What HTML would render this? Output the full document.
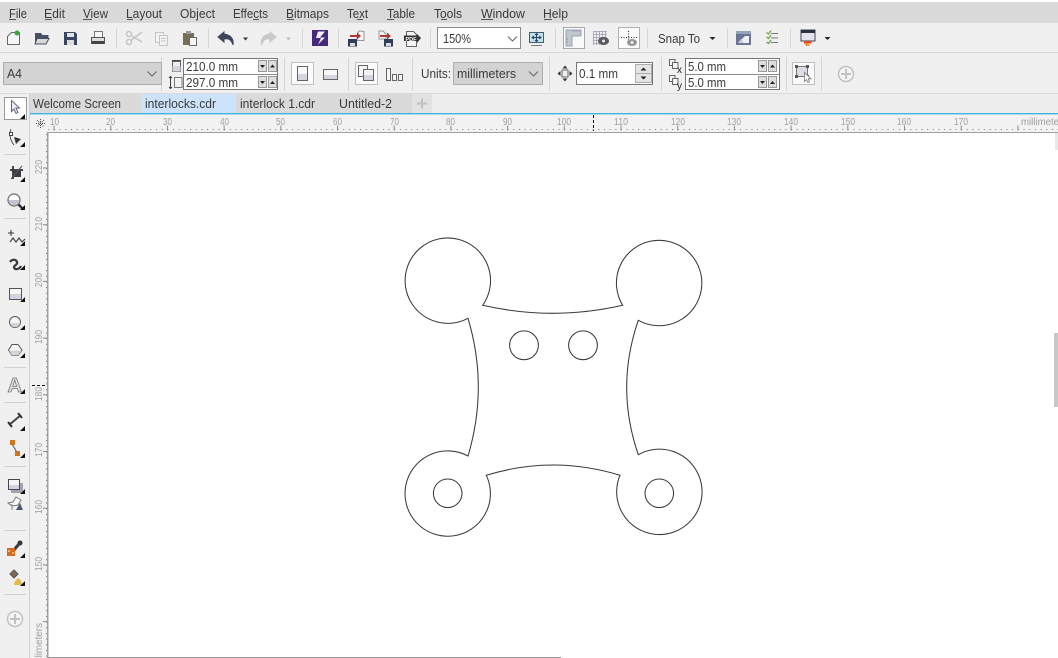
<!DOCTYPE html>
<html><head><meta charset="utf-8"><style>
html,body{margin:0;padding:0;width:1058px;height:658px;overflow:hidden;background:#fff}
svg{display:block;filter:blur(.3px)}
text{font-family:"Liberation Sans",sans-serif;font-size:13px;fill:#3a3a3a}
.r text{font-size:10px;fill:#a0a0a0}
</style></head><body>
<svg width="1058" height="658" viewBox="0 0 1058 658" xmlns="http://www.w3.org/2000/svg">
<defs>
<pattern id="hd" x="54" y="0" width="5.67" height="658" patternUnits="userSpaceOnUse"><rect x="0" y="129" width="1" height="1" fill="#777"/></pattern>
<pattern id="vd" x="0" y="168" width="658" height="5.67" patternUnits="userSpaceOnUse"><rect x="46" y="0" width="1" height="1" fill="#777"/></pattern>
</defs>
<!-- backgrounds -->
<rect width="1058" height="658" fill="#fff"/>
<rect y="2" width="1058" height="21" fill="#d9d9d9"/>
<rect y="23" width="1058" height="71" fill="#f0f0f0"/>
<rect y="52" width="1058" height="1" fill="#d9d9d9"/>
<rect y="93" width="1058" height="1" fill="#d9d9d9"/>
<rect y="94" width="1058" height="19" fill="#ededed"/>
<rect x="0" y="94" width="30" height="564" fill="#f0f0f0"/>
<rect x="30" y="114" width="1028" height="18" fill="#f2f2f2"/>
<rect x="30" y="114" width="18" height="544" fill="#f2f2f2"/>
<rect x="29" y="94" width="1" height="564" fill="#cfcfcf"/>
<!-- tabs -->
<rect x="30" y="94" width="111" height="19" fill="#dadada"/>
<rect x="141" y="94" width="95" height="19" fill="#cde3fb"/>
<rect x="236" y="94" width="99" height="19" fill="#dadada"/>
<rect x="335" y="94" width="77" height="19" fill="#dadada"/>
<rect x="412" y="94" width="20" height="19" fill="#e2e2e2"/>
<path d="M417 103.500h10M422 98.500v10" stroke="#c0c0c0" stroke-width="2"/>
<rect x="30" y="113" width="1028" height="1.400" fill="#3db5dc"/>
<text x="33" y="108" textLength="88" lengthAdjust="spacingAndGlyphs">Welcome Screen</text>
<text x="145" y="108" textLength="71" lengthAdjust="spacingAndGlyphs">interlocks.cdr</text>
<text x="240" y="108" textLength="75" lengthAdjust="spacingAndGlyphs">interlock 1.cdr</text>
<text x="339" y="108" textLength="53" lengthAdjust="spacingAndGlyphs">Untitled-2</text>
<!-- menu -->
<g>
<text x="9" y="18" textLength="18" lengthAdjust="spacingAndGlyphs">File</text>
<text x="44" y="18" textLength="21" lengthAdjust="spacingAndGlyphs">Edit</text>
<text x="83" y="18" textLength="25" lengthAdjust="spacingAndGlyphs">View</text>
<text x="126" y="18" textLength="36" lengthAdjust="spacingAndGlyphs">Layout</text>
<text x="180" y="18" textLength="35" lengthAdjust="spacingAndGlyphs">Object</text>
<text x="233" y="18" textLength="35" lengthAdjust="spacingAndGlyphs">Effects</text>
<text x="286" y="18" textLength="43" lengthAdjust="spacingAndGlyphs">Bitmaps</text>
<text x="347" y="18" textLength="21" lengthAdjust="spacingAndGlyphs">Text</text>
<text x="387" y="18" textLength="28" lengthAdjust="spacingAndGlyphs">Table</text>
<text x="434" y="18" textLength="28" lengthAdjust="spacingAndGlyphs">Tools</text>
<text x="481" y="18" textLength="44" lengthAdjust="spacingAndGlyphs">Window</text>
<text x="543" y="18" textLength="25" lengthAdjust="spacingAndGlyphs">Help</text>
<path d="M9 19.500h7M45 19.500h7M83 19.500h9M127 19.500h6M253 19.500h6M287 19.500h7M357 19.500h6M387 19.500h7M441 19.500h6M481 19.500h12M544 19.500h8" stroke="#555" stroke-width="1"/>
</g>
<!-- separators toolbar -->
<path d="M116.500 28v20M208.500 28v20M302.500 28v20M338.500 28v20M430.500 28v20M555.500 28v20M647.500 28v20M727.500 28v20M790.500 28v20M161.500 57v34M284.500 57v34M348.500 57v34M412.500 57v34M549.500 57v34M661.500 57v34M786.500 57v34M821.500 57v34" stroke="#d6d6d6"/>
<!-- new -->
<path d="M7.500 36.500L11.500 32.500H19.500V44.500H7.500Z" fill="#f5f5f5" stroke="#666"/>
<circle cx="17" cy="33" r="2.500" fill="#3aa53a"/>
<!-- open -->
<path d="M35 33h6l1.500 2h6v3h-11l-2.500 6Z" fill="#465166"/><path d="M37 38.500h12l-3 5.500H35Z" fill="#d8d8d8" stroke="#465166"/>
<!-- save -->
<path d="M64 32h11l2 2v11H64Z" fill="#39465f"/><rect x="67" y="33" width="7" height="4" fill="#e5e5e5"/><rect x="67" y="40" width="7" height="5" fill="#dfdfdf"/>
<!-- print -->
<path d="M94.500 31.500h8v6h-8Z" fill="#f7f7f7" stroke="#777"/><rect x="91.500" y="37.500" width="13" height="6" fill="#ddd" stroke="#555"/><rect x="92" y="41" width="12" height="3" fill="#444"/>
<!-- cut -->
<g stroke="#c4c4c4" fill="none" stroke-width="1.500"><circle cx="129" cy="34" r="2.500"/><circle cx="129" cy="42" r="2.500"/><path d="M131 35.500L142 42M131 40.500L142 32"/></g>
<!-- copy -->
<g fill="#f3f3f3" stroke="#c4c4c4"><rect x="155.500" y="32.500" width="8" height="10"/><rect x="159.500" y="35.500" width="8" height="10"/><path d="M161 38.500h5M161 41h5"/></g>
<!-- paste -->
<rect x="183" y="33" width="11" height="12" fill="#7a6d58"/><rect x="186" y="31" width="5" height="3" fill="#999"/><rect x="189.500" y="37.500" width="7" height="8" fill="#f6f6f6" stroke="#666"/>
<!-- undo -->
<path d="M224 32l-6 5 6 5v-3c4-.8 7 0 9 6 1-6-2-10-9-11Z" fill="#3d4759" stroke="#3d4759"/>
<path d="M243 37.500h5l-2.500 3Z" fill="#333"/>
<!-- redo -->
<path d="M270 32l6 5-6 5v-3c-4-.8-6.500 0-8.500 6-1-6 1.500-10 8.500-11Z" fill="#c9c9c9" stroke="#c9c9c9"/>
<path d="M286 37.500h5l-2.500 3Z" fill="#bdbdbd"/>
<!-- purple -->
<rect x="312" y="30" width="16" height="16" fill="#45297c"/>
<path d="M325 31.500H318L316 38H321L318 44.500L325 37.500H320Z" fill="#f2f0f4"/>
<!-- import -->
<path d="M359 31l5 .5v9h-7v-6Z" fill="#f5f5f5" stroke="#999"/><path d="M350 35h7v-2.500l4 3.500-4 3.500V37h-7Z" fill="#b23636"/><rect x="348" y="39" width="9" height="7.500" fill="#2e3d58"/><rect x="350" y="43" width="5" height="3" fill="#ddd"/>
<!-- export -->
<path d="M379 31h4l3 3v5h-7Z" fill="#f5f5f5" stroke="#999"/><path d="M380 35h7v-2.500l4 3.500-4 3.500V37h-7Z" fill="#b23636"/><rect x="384" y="39" width="9" height="7.500" fill="#2e3d58"/><rect x="386" y="43" width="5" height="3" fill="#ddd"/>
<!-- pdf -->
<path d="M406.500 31.500h7l3 3v12h-10Z" fill="#f4f4f4" stroke="#666"/><path d="M404 35.500h13v-1.500l4 4-4 5v-2h-13Z" fill="#333"/>
<text x="405.500" y="41" style="font-size:5.500px;font-weight:bold;fill:#fff">PDF</text>
<!-- zoom combo -->
<rect x="437.500" y="27.500" width="83" height="21" fill="#fff" stroke="#8a8a8a"/>
<text x="443" y="43" textLength="28" lengthAdjust="spacingAndGlyphs">150%</text>
<path d="M508 36.500l4.500 4.500 4.500-4.500" fill="none" stroke="#666"/>
<!-- view fit -->
<rect x="529.500" y="32.500" width="14" height="10" fill="#bfe1e8" stroke="#3d616e"/><path d="M531 45.500h11" stroke="#778"/><path d="M536.500 33.500v8M532 37.500h9M535 35l1.500-1.500L538 35M535 40l1.500 1.500L538 40M534 36l-2 1.500 2 1.500M539 36l2 1.500-2 1.500" fill="none" stroke="#2a4468"/>
<!-- rulers btn -->
<rect x="563.500" y="27.500" width="21" height="21" fill="#fafafa" stroke="#a8a8a8"/>
<path d="M566 30h15v6h-9v10h-6Z" fill="#c0c7d1" stroke="#98a2ae"/>
<path d="M573 30v2M576 30v2M579 30v2M566 39h2M566 42h2" stroke="#8a94a0"/>
<!-- grid -->
<path d="M593.500 31v14M596.500 31v14M599.500 31v14M602.500 31v14M605.500 31v7M593 31.500h14M593 34.500h14M593 37.500h14M593 40.500h6M593 43.500h6" stroke="#9c9cb4" stroke-width=".8"/>
<ellipse cx="603.500" cy="41" rx="5.500" ry="4" fill="#5a5a5a"/><circle cx="603.500" cy="41" r="1.500" fill="#e8e8e8"/>
<!-- guides btn -->
<rect x="618.500" y="27.500" width="21" height="21" fill="#fbfbfb" stroke="#b0b0b0"/>
<path d="M621 37.500h16M628.500 31v14" stroke="#333" stroke-dasharray="1 1.500"/>
<ellipse cx="632" cy="42.500" rx="5" ry="3.500" fill="#959595"/><circle cx="632" cy="42.500" r="1.500" fill="#eee"/>
<!-- snap -->
<text x="658" y="43" textLength="42" lengthAdjust="spacingAndGlyphs">Snap To</text>
<path d="M709.500 37h6l-3 3Z" fill="#222"/>
<!-- options -->
<rect x="736" y="31" width="15" height="14" fill="#6b7696"/><rect x="736" y="31" width="15" height="3" fill="#9aa2b6"/><path d="M745 36h4v7h-8v-3Z" fill="#eef0f4"/><path d="M738 43l3-4 2 2v2Z" fill="#c6cbe0"/>
<!-- checklist -->
<path d="M771 33.500h7M771 38h7M771 42.500h7" stroke="#777"/>
<g fill="none" stroke="#6ba645" stroke-width="1.300"><path d="M766.500 32.500l2 1.500 2.500-3.500M766.500 37l2 1.500 2.500-3.500M766.500 42l2 1.500 2.500-3.500"/></g>
<!-- publish -->
<rect x="801" y="30" width="14" height="11" fill="#e2e2ee" stroke="#3e4256"/><rect x="801" y="30" width="14" height="3" fill="#2a2f42"/>
<path d="M804 41h8l-1 3-1.500-1-.5 3h-3l-.5-3-1.500 1Z" fill="#dc4a25"/><path d="M806.500 43h3v3h-3Z" fill="#f0a030"/>
<path d="M824.500 37h6l-3 3Z" fill="#222"/>

<!-- property bar -->
<rect x="3.500" y="62.500" width="158" height="22" fill="#d3d3d3" stroke="#adadad"/>
<text x="7" y="78" textLength="15" lengthAdjust="spacingAndGlyphs">A4</text>
<path d="M147.500 71.500l4.500 4.500 4.500-4.500" fill="none" stroke="#666"/>
<!-- size icons -->
<rect x="172.500" y="61.500" width="8" height="10" fill="#eee" stroke="#666"/><path d="M172 60.500h9" stroke="#444"/><rect x="172.500" y="66" width="8" height="5.500" fill="#d4d4dc"/>
<rect x="174.500" y="77.500" width="7.500" height="10" fill="#f3f3f3" stroke="#777"/><path d="M170.500 76.500v12M169 78l1.500-1.500L172 78M169 87l1.500 1.500L172 87" stroke="#444" fill="none"/>
<!-- size input -->
<rect x="183.500" y="58.500" width="94" height="31" fill="#fff" stroke="#777"/><path d="M184 74.500h93" stroke="#8a8a8a"/>
<text x="186" y="71" textLength="52" lengthAdjust="spacingAndGlyphs">210.0 mm</text>
<text x="186" y="87" textLength="52" lengthAdjust="spacingAndGlyphs">297.0 mm</text>
<g fill="#dedede" stroke="#9a9a9a"><rect x="258.500" y="60.500" width="8" height="11"/><rect x="268.500" y="60.500" width="8" height="11"/><rect x="258.500" y="76.500" width="8" height="11"/><rect x="268.500" y="76.500" width="8" height="11"/></g>
<path d="M260 65h5l-2.500 3ZM270 67.500h5l-2.500-3ZM260 81h5l-2.500 3ZM270 84h5l-2.500-3Z" fill="#222"/>
<!-- portrait / landscape -->
<rect x="291.500" y="62.500" width="22" height="22" fill="#fbfbfb" stroke="#c0c0c0"/>
<rect x="297.500" y="66.500" width="10" height="14" fill="#f8f8f8" stroke="#666"/><rect x="298" y="74" width="9" height="6" fill="#d5d5e0"/>
<rect x="323.500" y="69.500" width="14" height="10" fill="#f8f8f8" stroke="#666"/><rect x="324" y="75" width="13" height="4" fill="#d5d5e0"/>
<!-- all pages -->
<rect x="355.500" y="62.500" width="22" height="22" fill="#fbfbfb" stroke="#c0c0c0"/>
<rect x="358.500" y="65.500" width="9" height="11" fill="#f4f4f4" stroke="#666"/><rect x="363.500" y="69.500" width="10" height="11" fill="#f4f4f4" stroke="#666"/><rect x="364" y="75" width="9" height="5" fill="#d5d5e0"/>
<rect x="386.500" y="68.500" width="4" height="12" fill="#f5f5f5" stroke="#666"/><rect x="392.500" y="74.500" width="4" height="6" fill="#f5f5f5" stroke="#666"/><rect x="398.500" y="74.500" width="4" height="6" fill="#f5f5f5" stroke="#666"/>
<!-- units -->
<text x="421" y="78" textLength="30" lengthAdjust="spacingAndGlyphs">Units:</text>
<rect x="453.500" y="62.500" width="89" height="22" fill="#d3d3d3" stroke="#adadad"/>
<text x="457" y="78" textLength="59" lengthAdjust="spacingAndGlyphs">millimeters</text>
<path d="M529 71.500l4.500 4.500 4.500-4.500" fill="none" stroke="#666"/>
<!-- nudge -->
<rect x="562" y="70" width="6" height="7" fill="#eee" stroke="#666"/><path d="M565 65.500l2.500 3h-5ZM565 81.500l2.500-3h-5ZM557.500 73.500l3-2.500v5ZM572.500 73.500l-3-2.500v5Z" fill="#333"/>
<rect x="576.500" y="62.500" width="76" height="22" fill="#fff" stroke="#777"/>
<text x="579" y="78" textLength="39" lengthAdjust="spacingAndGlyphs">0.1 mm</text>
<g fill="#e4e4e4" stroke="#adadad"><rect x="635.500" y="64.500" width="16" height="9"/><rect x="635.500" y="73.500" width="16" height="9"/></g>
<path d="M640.500 70.500h6l-3-3ZM640.500 76.500h6l-3 3Z" fill="#222"/>
<!-- duplicate -->
<g fill="#f3f3f3" stroke="#666"><rect x="669.500" y="59.500" width="5.500" height="6"/><rect x="672.500" y="62.500" width="5.500" height="6"/><rect x="669.500" y="75.500" width="5.500" height="6"/><rect x="672.500" y="78.500" width="5.500" height="6"/></g>
<text x="677" y="73" style="font-size:10px;fill:#222">x</text><text x="677" y="89" style="font-size:10px;fill:#222">y</text>
<rect x="685.500" y="58.500" width="94" height="31" fill="#fff" stroke="#777"/><path d="M686 74.500h93" stroke="#8a8a8a"/>
<text x="688" y="71" textLength="38" lengthAdjust="spacingAndGlyphs">5.0 mm</text>
<text x="688" y="87" textLength="38" lengthAdjust="spacingAndGlyphs">5.0 mm</text>
<g fill="#dedede" stroke="#9a9a9a"><rect x="758.500" y="60.500" width="8" height="11"/><rect x="768.500" y="60.500" width="8" height="11"/><rect x="758.500" y="76.500" width="8" height="11"/><rect x="768.500" y="76.500" width="8" height="11"/></g>
<path d="M760 65h5l-2.500 3ZM770 67.500h5l-2.500-3ZM760 81h5l-2.500 3ZM770 84h5l-2.500-3Z" fill="#222"/>
<!-- treat as filled -->
<rect x="792.500" y="62.500" width="22" height="22" fill="#fbfbfb" stroke="#c0c0c0"/>
<rect x="796.500" y="66.500" width="11" height="10" fill="#dcdce6" stroke="#777"/>
<path d="M795 65h3v3h-3ZM806 65h3v3h-3ZM795 75h3v3h-3ZM806 75h3v3h-3Z" fill="#555"/>
<path d="M804.500 72.500v9l2-2 1.500 3 1.500-.7-1.300-3h2.800Z" fill="#fff" stroke="#777" stroke-width=".8"/>
<!-- add -->
<circle cx="846" cy="74" r="7.500" fill="#f4f4f4" stroke="#c2c2c2" stroke-width="1.500"/><path d="M841 74h10M846 69v10" stroke="#c2c2c2" stroke-width="2"/>

<!-- rulers -->
<rect x="48" y="114" width="1010" height="16" fill="url(#hd)"/>
<rect x="30" y="133" width="18" height="525" fill="url(#vd)"/>
<path d="M54 125.500v5M110.700 125.500v5M167.400 125.500v5M224.100 125.500v5M280.800 125.500v5M337.500 125.500v5M394.200 125.500v5M450.900 125.500v5M507.600 125.500v5M564.300 125.500v5M621 125.500v5M677.700 125.500v5M734.400 125.500v5M791.100 125.500v5M847.800 125.500v5M904.500 125.500v5M961.200 125.500v5M1017.900 125.500v5" stroke="#8a8a8a"/>
<path d="M43 168h4M43 224.700h4M43 281.400h4M43 338.100h4M43 394.800h4M43 451.500h4M43 508.200h4M43 564.900h4M43 621.600h4" stroke="#8a8a8a"/>
<g class="r">
<text x="50" y="125" textLength="9" lengthAdjust="spacingAndGlyphs">10</text><text x="106" y="125" textLength="9" lengthAdjust="spacingAndGlyphs">20</text><text x="163" y="125" textLength="9" lengthAdjust="spacingAndGlyphs">30</text><text x="220" y="125" textLength="9" lengthAdjust="spacingAndGlyphs">40</text><text x="276" y="125" textLength="9" lengthAdjust="spacingAndGlyphs">50</text><text x="333" y="125" textLength="9" lengthAdjust="spacingAndGlyphs">60</text><text x="390" y="125" textLength="9" lengthAdjust="spacingAndGlyphs">70</text><text x="446" y="125" textLength="9" lengthAdjust="spacingAndGlyphs">80</text><text x="503" y="125" textLength="9" lengthAdjust="spacingAndGlyphs">90</text>
<text x="557" y="125" textLength="14" lengthAdjust="spacingAndGlyphs">100</text><text x="614" y="125" textLength="14" lengthAdjust="spacingAndGlyphs">110</text><text x="671" y="125" textLength="14" lengthAdjust="spacingAndGlyphs">120</text><text x="727" y="125" textLength="14" lengthAdjust="spacingAndGlyphs">130</text><text x="784" y="125" textLength="14" lengthAdjust="spacingAndGlyphs">140</text><text x="841" y="125" textLength="14" lengthAdjust="spacingAndGlyphs">150</text><text x="897" y="125" textLength="14" lengthAdjust="spacingAndGlyphs">160</text><text x="954" y="125" textLength="14" lengthAdjust="spacingAndGlyphs">170</text>
<text x="1021" y="125" textLength="46" lengthAdjust="spacingAndGlyphs">millimeters</text>
<text transform="translate(42 174) rotate(-90)" textLength="14" lengthAdjust="spacingAndGlyphs">220</text>
<text transform="translate(42 231) rotate(-90)" textLength="14" lengthAdjust="spacingAndGlyphs">210</text>
<text transform="translate(42 287) rotate(-90)" textLength="14" lengthAdjust="spacingAndGlyphs">200</text>
<text transform="translate(42 344) rotate(-90)" textLength="14" lengthAdjust="spacingAndGlyphs">190</text>
<text transform="translate(42 401) rotate(-90)" textLength="14" lengthAdjust="spacingAndGlyphs">180</text>
<text transform="translate(42 457) rotate(-90)" textLength="14" lengthAdjust="spacingAndGlyphs">170</text>
<text transform="translate(42 514) rotate(-90)" textLength="14" lengthAdjust="spacingAndGlyphs">160</text>
<text transform="translate(42 571) rotate(-90)" textLength="14" lengthAdjust="spacingAndGlyphs">150</text>
<text transform="translate(42 670) rotate(-90)" textLength="47" lengthAdjust="spacingAndGlyphs">millimeters</text>
</g>
<!-- origin -->
<path d="M37 120l7 7M44 120l-7 7M36 123.500h9M40.500 119v9" stroke="#444" stroke-dasharray="1 1" fill="none"/>
<!-- ruler edges -->
<rect x="48" y="132" width="1010" height="1" fill="#a0a0a0"/>
<rect x="47" y="132" width="1.500" height="526" fill="#a0a0a0"/>
<path d="M593.500 115v16" stroke="#111" stroke-dasharray="3 2"/>
<path d="M32 385.500h15" stroke="#111" stroke-dasharray="3 2"/>
<!-- bottom + scroll -->
<rect x="48" y="657" width="513" height="1" fill="#9a9a9a"/>
<rect x="1054" y="333" width="4" height="74" fill="#c8c8c8"/>
<rect x="1055" y="133" width="3" height="17" fill="#e8e8e8"/>

<!-- left tools -->
<path d="M4 154.500h22M4 218.500h22M4 367.500h22M4 402.500h22M4 466.500h22M4 530.500h22M4 594.500h22" stroke="#d2d2d2"/>
<rect x="4.500" y="97.500" width="22" height="22" fill="#fff" stroke="#999"/>
<path d="M11.500 100.500v11l2.500-2.500 2 4.500 2-1-2-4.500h3.500Z" fill="#eef" stroke="#667" stroke-width="1"/>
<!-- shape -->
<path d="M11 129c-2 5-1 11 3 16" fill="none" stroke="#555"/><rect x="9.500" y="132.500" width="3" height="3" fill="#fff" stroke="#444"/><path d="M14 137l7 2-5 5Z" fill="#333"/>
<!-- crop -->
<path d="M10 170h13M13 166v13" stroke="#333" stroke-width="1.800"/><rect x="13" y="170" width="8" height="7" fill="#3a3c46"/><path d="M11 179l11-13" stroke="#555" stroke-width="1"/>
<!-- zoom -->
<circle cx="14" cy="200" r="6" fill="#fff" stroke="#6a6a6a" stroke-width="1.200"/><path d="M8.500 200h11a5.500 5.500 0 0 1-11 0Z" fill="#c3c3cf"/><path d="M18.500 204.500l5 5" stroke="#333" stroke-width="2.500"/>
<!-- freehand -->
<path d="M8 233h6M11 230v6" stroke="#333"/><path d="M10 242l3-4 3 4 3-4 3 4 3-3" fill="none" stroke="#444" stroke-width="1.200"/>
<!-- artistic -->
<path d="M10 262c2-3 6-3 7 0 1 3-3 3-3 5 0 3 5 3 7-1" fill="none" stroke="#3a3a44" stroke-width="2.300"/>
<!-- rect -->
<rect x="9.500" y="288.500" width="12" height="11" fill="#f6f6f6" stroke="#555"/><rect x="10" y="294" width="11" height="5" fill="#d3d3de"/>
<!-- ellipse -->
<circle cx="15" cy="322" r="5.500" fill="#f6f6f6" stroke="#555"/><path d="M9.800 323h10.400a5.300 5.300 0 0 1-10.400 0Z" fill="#d3d3de"/>
<!-- polygon -->
<path d="M12 344.500h6l4 5.500-4 5.500h-6L8.500 350Z" fill="#f6f6f6" stroke="#555"/><path d="M9 350.500h12.500l-3.500 5h-6Z" fill="#d3d3de"/>
<!-- text A -->
<text x="7.500" y="392" style="font-size:20px;font-weight:bold;fill:#e0e0e8;stroke:#777;stroke-width:.8">A</text>
<!-- dimension -->
<path d="M9 425l12-10" stroke="#444" stroke-width="2"/><path d="M8 422l4 5M18 413l4 5" stroke="#333" stroke-width="2"/>
<!-- connector -->
<path d="M12 444l6 10" stroke="#555"/><rect x="10" y="440" width="5" height="5" fill="#d0741e"/><rect x="15" y="451" width="5" height="5" fill="#d0741e"/>
<!-- shadow -->
<rect x="11" y="483" width="12" height="10" fill="#a4a4af"/><rect x="8.500" y="479.500" width="11" height="10" fill="#f5f5f5" stroke="#464650"/><rect x="9" y="485" width="10" height="4" fill="#d3d3de"/>
<!-- transparency -->
<path d="M8 503l5-1 3-5 5 3-3 5-6 1Z" fill="#fff" stroke="#777"/><path d="M12 504v6" stroke="#888"/><path d="M20 503l3 7h-7Z" fill="#4a586f"/>
<!-- eyedropper -->
<path d="M13 551l6-7" stroke="#3a3a44" stroke-width="3"/><circle cx="20" cy="543" r="2.500" fill="#34343c"/>
<rect x="7" y="548" width="8" height="8" fill="#d66b1e"/><path d="M8 550h2v2H8ZM12 552h2v2h-2Z" fill="#f2b27a"/>
<!-- fill -->
<path d="M10 574l4-4 4 4-4 4Z" fill="#836a52" stroke="#555"/><path d="M14 585c0-4 3-6 4-7 2 1 4 3 4 7Z" fill="#e6ba48"/>
<!-- triangles -->
<path d="M25 114v5h-5ZM25 142v5h-5ZM25 177v5h-5ZM25 205v5h-5ZM25 241v5h-5ZM25 265v5h-5ZM25 297v5h-5ZM25 325v5h-5ZM25 353v5h-5ZM25 389v5h-5ZM25 426v5h-5ZM25 453v5h-5ZM25 489v5h-5ZM25 553v5h-5ZM25 581v5h-5Z" fill="#111"/>
<!-- plus -->
<circle cx="15" cy="619" r="7.500" fill="#f4f4f4" stroke="#c2c2c2" stroke-width="1.500"/><path d="M10 619h10M15 614v10" stroke="#c2c2c2" stroke-width="2"/>

<!-- drawing -->
<g fill="none" stroke="#3a3a3a" stroke-width="1.050">
<path d="M482.700 305.300A42.700 42.700 0 1 0 468 318.300Q488.600 387 468 456A42.700 42.700 0 1 0 486.300 475.300Q553 454.700 620 475.300A42.700 42.700 0 1 0 638.300 454.700Q615.100 387.500 638.300 320.300A42.700 42.700 0 1 0 622.700 305.300Q553 321.300 482.700 305.300Z"/>
<circle cx="524" cy="345.300" r="14.400"/>
<circle cx="583" cy="345.300" r="14.400"/>
<circle cx="447.700" cy="493.300" r="14.300"/>
<circle cx="659.300" cy="493.300" r="14.300"/>
</g>
</svg>
</body></html>
